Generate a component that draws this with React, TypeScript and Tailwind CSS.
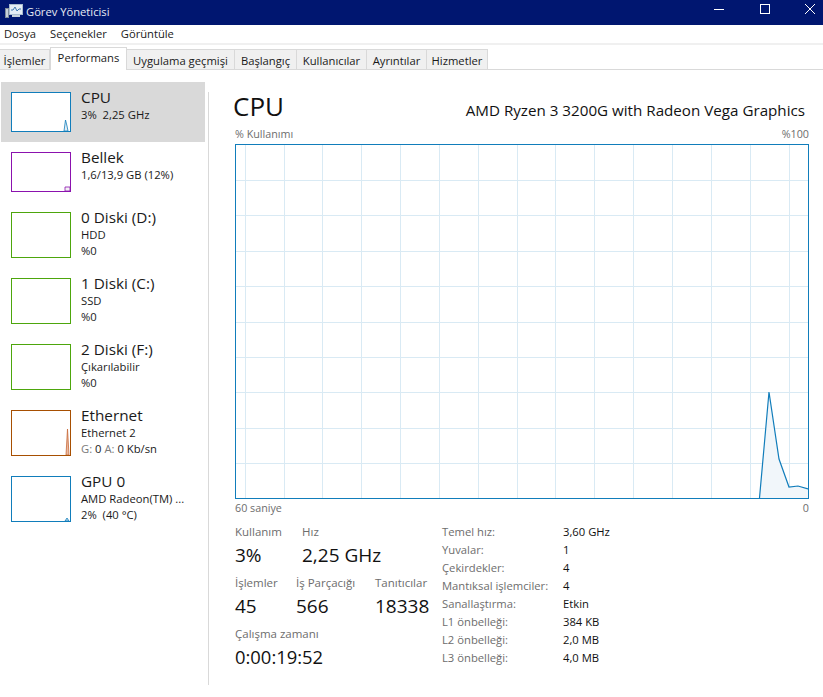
const tabs = [
  { label: "İşlemler", width: "w-[50px]" },
  { label: "Performans", width: "w-[77px]", active: true },
  { label: "Uygulama geçmişi", width: "w-[108px]" },
  { label: "Başlangıç", width: "w-[62px]" },
  { label: "Kullanıcılar", width: "w-[70px]" },
  { label: "Ayrıntılar", width: "w-[60px]" },
  { label: "Hizmetler", width: "w-[61px]" },
];

function Thumb({ color, h, children }: { color: string; h: string; children?: React.ReactNode }) {
  return (
    <div className={`w-[60px] shrink-0 border relative overflow-hidden bg-white ${color} ${h}`}>{children}</div>
  );
}

function Device({
  name,
  lines,
  color,
  selected,
  tall = true,
  spark,
}: {
  name: string;
  lines: React.ReactNode[];
  color: string;
  selected?: boolean;
  tall?: boolean;
  spark?: React.ReactNode;
}) {
  return (
    <div className={`flex pl-[10px] pt-[10px] ${tall ? "h-[66px]" : "h-[60px]"} ${selected ? "bg-[#d9d9d9]" : ""}`}>
      <Thumb color={color} h={tall ? "h-[46px]" : "h-[40px]"}>
        {spark}
      </Thumb>
      <div className="ml-[10px] -mt-[5px] text-[11.25px] leading-[16px] text-[#1a1a1a] whitespace-pre">
        <div className="text-[15.3px] leading-[20px]">{name}</div>
        {lines.map((l, i) => (
          <div key={i}>{l}</div>
        ))}
      </div>
    </div>
  );
}

function Spark({ points, stroke, fill, height }: { points: string; stroke: string; fill: string; height: number }) {
  return (
    <svg className="absolute inset-0 w-full h-full" viewBox={`0 0 58 ${height}`} preserveAspectRatio="none">
      <polygon points={points} fill={fill} stroke={stroke} strokeWidth="0.8" />
    </svg>
  );
}

function Chart() {
  const vertical = [9.5, 48.5, 86.5, 125.5, 164.5, 203.5, 242.5, 281.5, 319.5, 358.5, 397.5, 436.5, 475.5, 514.5, 553.5];
  const horizontal = [35.5, 70.5, 106.5, 141.5, 177.5, 212.5, 247.5, 283.5, 318.5];
  return (
    <div className="ml-[26px] w-[574px] h-[355px] border border-[#117dbb] box-border">
      <svg width="572" height="353" viewBox="0 0 572 353" className="block">
        {vertical.map((x) => (
          <line key={x} x1={x} y1="0" x2={x} y2="353" stroke="#d9eaf4" strokeWidth="1" />
        ))}
        {horizontal.map((y) => (
          <line key={y} x1="0" y1={y} x2="572" y2={y} stroke="#d9eaf4" strokeWidth="1" />
        ))}
        <polygon points="523.5,353 533,247 543,314 553,342 562,341 572,344 572,353" fill="#f1f6fa" />
        <polyline points="523.5,353 533,247 543,314 553,342 562,341 572,344" fill="none" stroke="#117dbb" strokeWidth="1.2" />
      </svg>
    </div>
  );
}

function Stat({ label, value, className, valueSize = "text-[19px]" }: { label: string; value: string; className?: string; valueSize?: string }) {
  return (
    <div className={className}>
      <div className="text-[11.5px] leading-[16px] mb-[2px] text-[#6d6d6d]">{label}</div>
      <div className={`${valueSize} leading-[26px] text-[#111]`}>{value}</div>
    </div>
  );
}

const specs = [
  ["Temel hız:", "3,60 GHz"],
  ["Yuvalar:", "1"],
  ["Çekirdekler:", "4"],
  ["Mantıksal işlemciler:", "4"],
  ["Sanallaştırma:", "Etkin"],
  ["L1 önbelleği:", "384 KB"],
  ["L2 önbelleği:", "2,0 MB"],
  ["L3 önbelleği:", "4,0 MB"],
];

export default function App() {
  return (
    <div className="w-[823px] h-[697px] bg-white overflow-hidden font-['Open_Sans','Noto_Sans',sans-serif] text-[#1a1a1a] flex flex-col">
      <div className="h-[25px] bg-[#001670] flex items-center shrink-0 text-white">
        <svg width="18" height="15" viewBox="0 0 18 15" className="ml-[5px] mb-[2px]">
          <rect x="4.5" y="0.5" width="13" height="10" fill="#e4edf6" stroke="#a9bccf" />
          <rect x="0.5" y="4.5" width="3" height="9" fill="#c8d2dc" stroke="#7f8c9a" />
          <polyline points="6,6 8,6 10,3 12,7 14,5 16,5" fill="none" stroke="#3f79b0" strokeWidth="1" />
          <rect x="7" y="11" width="8" height="2" fill="#c8d2dc" />
        </svg>
        <span className="ml-[3px] text-[11.2px] text-[#e8ebf4]">Görev Yöneticisi</span>
        <div className="ml-auto flex items-start self-start h-full">
          <svg width="10" height="10" viewBox="0 0 10 10" className="mt-[4px] mr-[36px]">
            <line x1="0" y1="5.5" x2="10" y2="5.5" stroke="#fff" strokeWidth="1" />
          </svg>
          <svg width="10" height="10" viewBox="0 0 10 10" className="mt-[4px] mr-[35px]">
            <rect x="0.5" y="0.5" width="9" height="9" fill="none" stroke="#fff" strokeWidth="1" />
          </svg>
          <svg width="10" height="10" viewBox="0 0 10 10" className="mt-[4px] mr-[8px]">
            <path d="M0 0L10 10M10 0L0 10" fill="none" stroke="#fff" strokeWidth="1" />
          </svg>
        </div>
      </div>

      <div className="h-[18px] shrink-0 flex items-center text-[11.2px] pl-[4px] gap-[14px]">
        <span>Dosya</span>
        <span>Seçenekler</span>
        <span>Görüntüle</span>
      </div>
      <div className="h-[2px] shrink-0 bg-[#f0f0f0]" />

      <div className="h-[25px] shrink-0 flex items-end border-b border-[#d9d9d9]">
        {tabs.map((t) => (
          <div
            key={t.label}
            className={`${t.width} shrink-0 text-center text-[11.25px] whitespace-nowrap border-r border-[#d9d9d9] ${
              t.active
                ? "h-[23px] -mb-[1px] bg-white border-l border-t leading-[20px]"
                : "h-[20px] bg-[#f0f0f0] border-t leading-[21px]"
            }`}
          >
            {t.label}
          </div>
        ))}
      </div>

      <div className="flex flex-1 min-h-0">
        <div className="w-[209px] shrink-0 pt-[12px] flex flex-col">
          <div className="flex flex-1 min-h-0">
            <div className="w-[204px] ml-[1px] shrink-0">
              <Device
                name="CPU"
                lines={["3%  2,25 GHz"]}
                color="border-[#117dbb]"
                selected
                tall={false}
                spark={<Spark height={38} points="52,38 53.5,27 55,33 56,38" stroke="#117dbb" fill="#e3eef6" />}
              />
              <Device
                name="Bellek"
                lines={["1,6/13,9 GB (12%)"]}
                color="border-[#8b12ae]"
                tall={false}
                spark={<Spark height={38} points="53,38 53,34 58,34 58,38" stroke="#8b12ae" fill="#f4f2f4" />}
              />
              <Device name="0 Diski (D:)" lines={["HDD", "%0"]} color="border-[#4da60c]" />
              <Device name="1 Diski (C:)" lines={["SSD", "%0"]} color="border-[#4da60c]" />
              <Device name="2 Diski (F:)" lines={["Çıkarılabilir", "%0"]} color="border-[#4da60c]" />
              <Device
                name="Ethernet"
                lines={[
                  "Ethernet 2",
                  <>
                    <span className="text-[#7a7a7a]">G:</span> 0 <span className="text-[#7a7a7a]">A:</span> 0 Kb/sn
                  </>,
                ]}
                color="border-[#a74f01]"
                spark={<Spark height={44} points="54,44 55.5,18 57,44" stroke="#c8693a" fill="#e9b9a0" />}
              />
              <Device
                name="GPU 0"
                lines={["AMD Radeon(TM) ...", "2%  (40 °C)"]}
                color="border-[#117dbb]"
                spark={<Spark height={44} points="53,44 55,41 57,44" stroke="#117dbb" fill="#bcd8ea" />}
              />
            </div>
            <div className="w-[1px] ml-[3px] mt-[10px] mb-[12px] bg-[#d9d9d9]" />
          </div>
        </div>

        <div className="flex-1 min-w-0">
          <div className="h-[55px] pl-[24px] pr-[18px] flex items-end justify-between">
            <span className="text-[26px] leading-[34px] mb-[2px] text-[#111]">CPU</span>
            <span className="text-[15.18px] leading-[20px] mb-[5px] text-[#111]">AMD Ryzen 3 3200G with Radeon Vega Graphics</span>
          </div>
          <div className="h-[19px] pl-[26px] pr-[14px] flex justify-between items-center text-[10.75px] text-[#6d6d6d]">
            <span>% Kullanımı</span>
            <span>%100</span>
          </div>
          <Chart />
          <div className="h-[18px] pl-[26px] pr-[14px] flex justify-between items-center text-[10.75px] text-[#6d6d6d]">
            <span>60 saniye</span>
            <span>0</span>
          </div>

          <div className="flex pl-[26px] mt-[7px]">
            <div className="w-[207px] shrink-0 flex flex-col gap-[7px]">
              <div className="flex">
                <Stat label="Kullanım" value="3%" className="w-[67px]" />
                <Stat label="Hız" value="2,25 GHz" />
              </div>
              <div className="flex">
                <Stat label="İşlemler" value="45" className="w-[61px]" />
                <Stat label="İş Parçacığı" value="566" className="w-[79px]" />
                <Stat label="Tanıtıcılar" value="18338" />
              </div>
              <Stat label="Çalışma zamanı" value="0:00:19:52" valueSize="text-[18.4px]" />
            </div>
            <div className="text-[11.25px] leading-[18px] -mt-[1px]">
              {specs.map(([k, v]) => (
                <div key={k} className="flex">
                  <span className="w-[121px] text-[#6d6d6d]">{k}</span>
                  <span className="text-[#111]">{v}</span>
                </div>
              ))}
            </div>
          </div>
        </div>
      </div>
    </div>
  );
}
